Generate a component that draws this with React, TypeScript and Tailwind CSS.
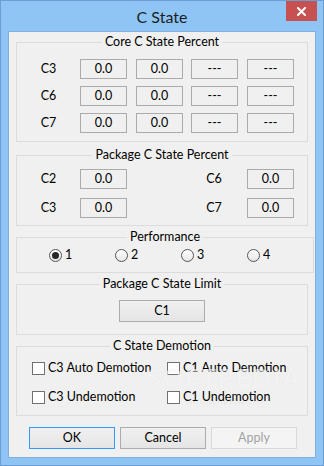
import React from "react";

type FieldProps = { value: string; className?: string };

// read-only edit box, Win8 style
function Field({ value, className = "" }: FieldProps) {
  return (
    <div
      className={`w-[47px] h-[20px] shrink-0 border border-[#ababab] bg-[#f0f0f0] flex items-center justify-center text-[12.5px] leading-none ${className}`}
    >
      {value}
    </div>
  );
}

function Group({
  title,
  className = "",
  children,
}: {
  title: string;
  className?: string;
  children: React.ReactNode;
}) {
  return (
    <fieldset className={`mx-[7px] border border-[#dcdcdc] ${className}`}>
      <legend className="mx-auto px-[3px] text-[12.5px] leading-4">{title}</legend>
      {children}
    </fieldset>
  );
}

function Radio({ label, checked }: { label: string; checked?: boolean }) {
  return (
    <div className="w-[66px] h-[13px] flex items-center">
      <span className="w-[13px] h-[13px] shrink-0 rounded-full border border-[#555555] bg-linear-to-b from-white to-[#e6e6e6] flex items-center justify-center">
        {checked && <span className="w-[7px] h-[7px] rounded-full bg-[#262626]" />}
      </span>
      <span className="ml-[3px] text-[12.5px] leading-none">{label}</span>
    </div>
  );
}

function Check({ label, className = "" }: { label: string; className?: string }) {
  return (
    <div className={`h-[13px] flex items-center ${className}`}>
      <span className="w-[13px] h-[13px] shrink-0 border border-[#707070] bg-white" />
      <span className="ml-[3px] text-[12.5px] leading-none whitespace-nowrap">{label}</span>
    </div>
  );
}

function Button({
  children,
  variant = "normal",
  className = "",
}: {
  children: React.ReactNode;
  variant?: "normal" | "default" | "disabled";
  className?: string;
}) {
  const look =
    variant === "default"
      ? "border-[#3399ff] from-[#f0f0f0] to-[#e5e5e5] text-black"
      : variant === "disabled"
      ? "border-[#d9d9d9] from-[#f4f4f4] to-[#f4f4f4] text-[#a3a3a3]"
      : "border-[#acacac] from-[#f0f0f0] to-[#e5e5e5] text-black";
  return (
    <button
      className={`w-[86px] h-[22px] shrink-0 border bg-linear-to-b text-[12.5px] leading-none ${look} ${className}`}
    >
      {children}
    </button>
  );
}

const coreRows = [
  { label: "C3", values: ["0.0", "0.0", "---", "---"] },
  { label: "C6", values: ["0.0", "0.0", "---", "---"] },
  { label: "C7", values: ["0.0", "0.0", "---", "---"] },
];

const pkgRows = [
  { left: "C2", right: "C6" },
  { left: "C3", right: "C7" },
];

export default function App() {
  return (
    <div className="w-[324px] h-[466px] flex flex-col border border-[#6b9fd4] bg-[#8ec5f5] text-black font-[Lato,sans-serif]">
      {/* title bar */}
      <div className="relative h-[30px] shrink-0 flex items-center justify-center">
        <span className="text-[16px] text-[#1e1e1e] leading-none mt-[1px]">C State</span>
        <div className="absolute right-[6px] top-0 w-[31px] h-[20px] bg-[#c75050] flex items-center justify-center">
          <svg width="9" height="9" viewBox="0 0 9 9">
            <path d="M1 1 L8 8 M8 1 L1 8" stroke="white" strokeWidth="2" strokeLinecap="square" />
          </svg>
        </div>
      </div>

      {/* client area */}
      <div className="mx-[7px] h-[427px] border border-[#83afdc] bg-[#f0f0f0] flex flex-col">
        <Group title="Core C State Percent" className="mt-[2px] h-[108px]">
          <div className="flex flex-col gap-[7px] pt-[9px]">
            {coreRows.map((row) => (
              <div key={row.label} className="flex items-center h-[20px]">
                <span className="w-[63px] text-center text-[12.5px] leading-none">{row.label}</span>
                <Field value={row.values[0]} />
                <Field value={row.values[1]} className="ml-[9px]" />
                <Field value={row.values[2]} className="ml-[8px]" />
                <Field value={row.values[3]} className="ml-[9px]" />
              </div>
            ))}
          </div>
        </Group>

        <Group title="Package C State Percent" className="mt-[5px] h-[79px]">
          <div className="flex flex-col gap-[9px] pt-[6px]">
            {pkgRows.map((row) => (
              <div key={row.left} className="flex items-center h-[20px]">
                <span className="w-[63px] text-center text-[12.5px] leading-none">{row.left}</span>
                <Field value="0.0" />
                <span className="ml-[54px] w-[66px] text-center text-[12.5px] leading-none">{row.right}</span>
                <Field value="0.0" />
              </div>
            ))}
          </div>
        </Group>

        <Group title="Performance" className="mt-[3px] h-[44px]">
          <div className="flex items-center pt-[4px] pl-[32px]">
            <Radio label="1" checked />
            <Radio label="2" />
            <Radio label="3" />
            <Radio label="4" />
          </div>
        </Group>

        <Group title="Package C State Limit" className="mt-[3px] h-[59px]">
          <div className="flex justify-center pt-[8px]">
            <Button>C1</Button>
          </div>
        </Group>

        <Group title="C State Demotion" className="relative mt-[3px] h-[78px]">
          <div className="flex flex-col gap-[16px] pt-[8px] pl-[15px]">
            <div className="flex">
              <Check label="C3 Auto Demotion" className="w-[135px]" />
              <Check label="C1 Auto Demotion" />
            </div>
            <div className="flex">
              <Check label="C3 Undemotion" className="w-[135px]" />
              <Check label="C1 Undemotion" />
            </div>
          </div>
          {/* watermark */}
          <div className="pointer-events-none absolute left-[130px] top-[11px] flex flex-col items-center">
            <span className="text-[25px] font-bold tracking-[2px] leading-none text-white/60 [text-shadow:0_0_1px_rgba(0,0,0,0.07)]">
              SOFTPEDIA
            </span>
            <span className="mt-[6px] text-[9px] leading-none text-black/[0.06]">www.softpedia.com</span>
          </div>
        </Group>

        <div className="mt-[11px] ml-[20px] flex gap-[5px]">
          <Button variant="default">OK</Button>
          <Button>Cancel</Button>
          <Button variant="disabled">Apply</Button>
        </div>
      </div>
    </div>
  );
}
